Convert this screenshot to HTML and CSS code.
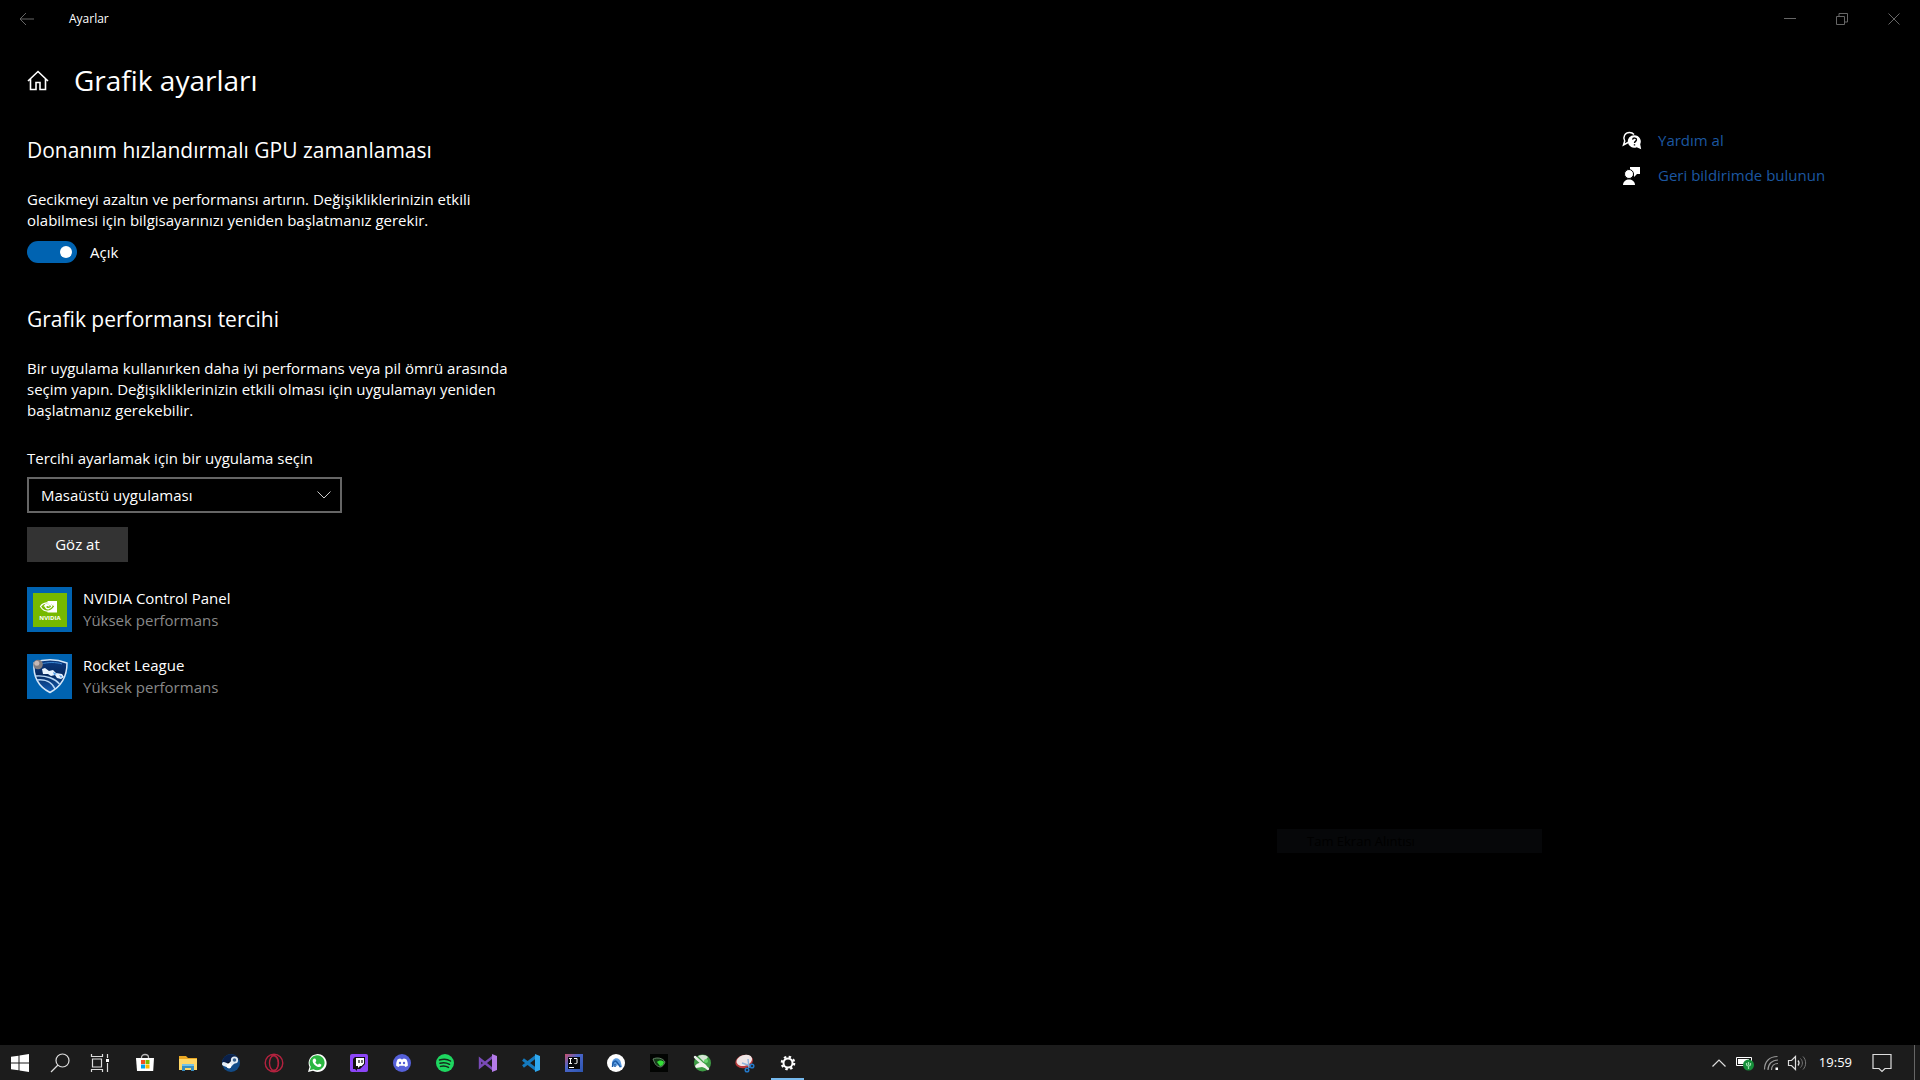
FILE: index.html
```html
<!DOCTYPE html>
<html lang="tr">
<head>
  <meta charset="UTF-8" />
  <meta name="viewport" content="width=device-width, initial-scale=1.0" />
  <title>Ayarlar</title>
  <link rel="stylesheet" href="styles.css">
</head>
<body>

  <header class="titlebar">
    <button class="back-btn" aria-label="Geri">
      <svg width="16" height="14" viewBox="0 0 16 14"><path d="M15 7H1M7 1L1 7l6 6" /></svg>
    </button>
    <span class="app-title">Ayarlar</span>
    <div class="window-buttons">
      <button aria-label="Simge durumuna küçült">
        <svg width="12" height="12" viewBox="0 0 12 12"><path d="M0 5.500h12" /></svg>
      </button>
      <button aria-label="Önceki boyut">
        <svg width="12" height="12" viewBox="0 0 12 12"><path d="M.5 3.500h8v8h-8zM3 3.500v-3h8.500v8.500h-3" /></svg>
      </button>
      <button aria-label="Kapat">
        <svg width="12" height="12" viewBox="0 0 12 12"><path d="M.5.5l11 11M11.500.5l-11 11" /></svg>
      </button>
    </div>
  </header>

  <div class="page-head">
    <a href="#" class="home-link" aria-label="Giriş">
      <svg width="22" height="22" viewBox="0 0 22 22"><path d="M1 12L11 2.500l10 9.500M3.500 10v10.500H9v-7h4v7h5.500V10" /></svg>
    </a>
    <h1>Grafik ayarları</h1>
  </div>

  <main class="content">
    <div class="settings">
      <section class="gpu">
        <h2>Donanım hızlandırmalı GPU zamanlaması</h2>
        <p>Gecikmeyi azaltın ve performansı artırın. Değişikliklerinizin etkili<br>olabilmesi için bilgisayarınızı yeniden başlatmanız gerekir.</p>
        <label class="toggle">
          <input type="checkbox" checked>
          <span>Açık</span>
        </label>
      </section>

      <section class="preference">
        <h2>Grafik performansı tercihi</h2>
        <p>Bir uygulama kullanırken daha iyi performans veya pil ömrü arasında<br>seçim yapın. Değişikliklerinizin etkili olması için uygulamayı yeniden<br>başlatmanız gerekebilir.</p>
        <label class="select-label" for="app-type">Tercihi ayarlamak için bir uygulama seçin</label>
        <div class="select-box">
          <select id="app-type">
            <option>Masaüstü uygulaması</option>
            <option>Microsoft Store uygulaması</option>
          </select>
          <svg class="chevron" width="14" height="8" viewBox="0 0 14 8"><path d="M.5.5L7 7 13.500.5" /></svg>
        </div>
        <button class="browse-btn">Göz at</button>
      </section>

      <ul class="app-list">
        <li>
          <svg class="app-icon" viewBox="0 0 45 45">
            <path fill="#76b900" d="M6 6h34v34H6z" />
            <path fill="#fff" d="M20.500 14H30v11.500h-9.500z" />
            <path fill="#76b900" stroke="#fff" stroke-width="1.200" d="M13.500 19.500c2.500-4 8.500-5.500 14.500-.5-4 6.500-10.500 7-14.500.5z" />
            <path fill="none" stroke="#fff" stroke-width="1.300" d="M17 19.500c2-3 5.500-3.500 8-.5-2 3.500-5.500 3.500-6.500 1 1-2 2.500-2 4-.8" />
            <text x="23" y="33" text-anchor="middle" class="nvidia-text">NVIDIA</text>
          </svg>
          <div>
            <div class="app-name">NVIDIA Control Panel</div>
            <div class="app-mode">Yüksek performans</div>
          </div>
        </li>
        <li>
          <svg class="app-icon" viewBox="0 0 45 45">
            <defs>
              <linearGradient id="shield" x1="0" y1="0" x2="0" y2="1">
                <stop offset="0" stop-color="#0c3a80" />
                <stop offset=".45" stop-color="#06295f" />
                <stop offset="1" stop-color="#1460b8" />
              </linearGradient>
            </defs>
            <path fill="url(#shield)" stroke="#d5e7f8" stroke-width="1.500" d="M7 9c10-4 22-4 33 0 0 14-5 23-17 29.500C12 33 6 23 7 9z" />
            <path fill="none" stroke="#b9d8f5" stroke-width="1.400" d="M10 26c8-1 15 2 18 9M8.500 22c11-1 20 3 24 8" />
            <path fill="none" stroke="#3b86d0" d="M14 10c7-2 15-2 21 0" />
            <path fill="#e8f3fd" d="M15 15l3-1 4 3 4-1 3 3 6 1 2 3-3 2-4-1-2-3-4 1-3-2-5 0z" />
            <path fill="#4c9be8" d="M19 16l3 2M26 18l4 2-3 1zM32 21l3 1-1 2z" />
            <circle cx="11" cy="10.500" r="4.800" fill="#817d80" />
            <circle cx="9.800" cy="9.300" r="2.500" fill="#c7b9b5" />
          </svg>
          <div>
            <div class="app-name">Rocket League</div>
            <div class="app-mode">Yüksek performans</div>
          </div>
        </li>
      </ul>
    </div>

    <aside class="help">
      <a href="#">
        <svg width="20" height="20" viewBox="0 0 20 20">
          <path fill="none" stroke="#fff" stroke-width="1.500" d="M6 11.500L1.500 14l1.200-4C.5 6 3 1.500 7.500 1.500c2 0 3.500.8 4.500 2" />
          <path fill="#fff" d="M12.500 4.200a6.300 6.300 0 0 1 5.700 9l1 5-4.500-2A6.300 6.300 0 1 1 12.500 4.200z" />
          <path fill="none" stroke="#000" stroke-width="1.400" d="M10.600 8.700c.3-2.400 4-2 3.800.2-.2 1.500-1.900 1.500-1.900 3.200M12.500 13.200v1.300" />
        </svg>
        <span>Yardım al</span>
      </a>
      <a href="#">
        <svg width="20" height="20" viewBox="0 0 20 20">
          <path fill="#fff" d="M8 1h10v7h-3l-3 3V8L8 4z" />
          <circle cx="7" cy="8" r="4.500" fill="#fff" stroke="#000" />
          <path fill="#fff" d="M1 19c0-7.500 12-7.500 12 0z" />
        </svg>
        <span>Geri bildirimde bulunun</span>
      </a>
    </aside>
  </main>

  <div class="snip-ghost">Tam Ekran Alıntısı</div>

  <footer class="taskbar">
    <nav class="system">
      <button aria-label="Başlat">
        <svg width="20" height="20" viewBox="0 0 20 20"><path fill="#fff" d="M1 3.800L8.500 2.700v6.800H1zM9.500 2.600L19 1v8.500H9.500zM1 10.500h7.500v6.800L1 16.200zM9.500 10.500H19V19l-9.500-1.500z" /></svg>
      </button>
      <button aria-label="Ara">
        <svg width="20" height="20" viewBox="0 0 20 20"><g class="line"><circle cx="12.500" cy="7.500" r="6.500" /><path d="M8 12l-7 7" /></g></svg>
      </button>
      <button aria-label="Görev görünümü">
        <svg width="20" height="20" viewBox="0 0 20 20"><path class="line" d="M1.500 1v2.500h11V1M2.500 6h9v8h-9zM1.500 19v-2.500h11V19M17.500 1v4M17.500 10v9" /><path fill="#fff" d="M16 6h3v3h-3z" /></svg>
      </button>
    </nav>

    <nav class="pinned">
      <button aria-label="Microsoft Store">
        <svg viewBox="0 0 20 20"><path fill="none" stroke="#bbb" stroke-width="1.300" d="M6.500 7V4.500c0-4 7-4 7 0V7" /><path fill="#fff" d="M1 5h18l-.8 13H2z" /><path fill="#f25022" d="M6 7h4v4H6z" /><path fill="#7fba00" d="M10.500 7h4v4h-4z" /><path fill="#00a4ef" d="M6 11.500h4v4H6z" /><path fill="#ffb900" d="M10.500 11.500h4v4h-4z" /></svg>
      </button>
      <button aria-label="Dosya Gezgini">
        <svg viewBox="0 0 20 20"><path fill="#e9a723" d="M1 3h7l2 2h9v12H1z" /><path fill="#ffd767" d="M1 6h18v11H1z" /><path fill="#398fc0" d="M4 18v-7h12v7h-3v-3H7v3z" /><path fill="#76c3e8" d="M4 11h12v2H4z" /></svg>
      </button>
      <button aria-label="Steam">
        <svg viewBox="0 0 20 20"><circle cx="10" cy="10" r="9" fill="#124b87" /><path fill="#0a204a" d="M3 4.500a9 9 0 0 1 15 2L9 12 1 9z" /><path stroke="#e4edf5" stroke-width="4" stroke-linecap="round" d="M3 11l5 2 6-6" /><circle cx="13.500" cy="7" r="3.600" fill="#e4edf5" /><circle cx="13.500" cy="7" r="1.800" fill="#39628f" /><circle cx="8" cy="13" r="2.400" fill="#fff" /></svg>
      </button>
      <button aria-label="Opera GX">
        <svg viewBox="0 0 20 20"><g fill="none" stroke="#b5223f"><circle cx="10" cy="10" r="8.800" stroke-width="1.400" /><ellipse cx="10" cy="10" rx="4.500" ry="7.500" stroke-width="1.400" /><path d="M7 3c9-3 10 17 0 14" /></g></svg>
      </button>
      <button aria-label="WhatsApp">
        <svg viewBox="0 0 20 20"><path fill="#fff" d="M1 19l1.500-5A9 9 0 1 1 6 17.800z" /><path fill="#2bb741" d="M2.800 17.200l1-3.400A7.500 7.500 0 1 1 6.500 16.300z" /><path fill="#fff" d="M7 5.500l1.500.2.8 2.300-1 1.200c.6 1.200 1.400 2 2.700 2.600l1-1.200 2.300 1c.2 4-4.500 2.400-6.500.3C5.700 10 4.700 7 7 5.500z" /></svg>
      </button>
      <button aria-label="Twitch">
        <svg viewBox="0 0 20 20"><rect x="1" y="1" width="18" height="18" rx="2" fill="#8c45f7" /><path fill="#111" d="M4 6l2-2h10v7l-5 5H8v2l-2-2H4z" /><path fill="#fff" d="M7 5h8v5.500L12.500 13H11l-2 2v-2H7z" /><path stroke="#222" stroke-width="1.300" d="M10 7v3M13 7v3" /></svg>
      </button>
      <button aria-label="Discord">
        <svg viewBox="0 0 20 20"><circle cx="10" cy="10" r="9" fill="#5560d8" /><path fill="#fff" d="M5.500 6.500c1-.8 2-1 3-1l.5.8h2l.5-.8c1 0 2 .2 3 1 1 2 1.500 4 1.300 6.300-1 .8-1.800 1-2.500 1.200l-.9-1.300H7.600L6.700 14c-.8-.2-1.500-.4-2.500-1.200C4 10.500 4.500 8.500 5.500 6.500z" /><circle cx="8" cy="10" r="1.200" fill="#5560d8" /><circle cx="12" cy="10" r="1.200" fill="#5560d8" /></svg>
      </button>
      <button aria-label="Spotify">
        <svg viewBox="0 0 20 20"><circle cx="10" cy="10" r="9" fill="#1ed760" /><path fill="none" stroke="#17281c" stroke-width="1.500" stroke-linecap="round" d="M4.500 7c4-1.300 8-1 11 1M5 10.300c3.500-1 6.500-.6 9.500 1M5.500 13.400c3-.8 5.500-.5 8 1" /></svg>
      </button>
      <button aria-label="Visual Studio">
        <svg viewBox="0 0 20 20"><path fill="none" stroke="#7a4bb8" stroke-width="2.400" d="M14.500 4L2 14V6l12.500 10" /><path fill="#b47be8" d="M14 1l5 2v14l-5 2z" /></svg>
      </button>
      <button aria-label="Visual Studio Code">
        <svg viewBox="0 0 20 20"><path fill="none" stroke="#1479bd" stroke-width="3" d="M15 3.500L2 13.500M2 6.500l13 10" /><path fill="#2fa8ee" d="M14 1l5 2v14l-5 2z" /></svg>
      </button>
      <button aria-label="IntelliJ IDEA">
        <svg viewBox="0 0 20 20"><defs><linearGradient id="idea" x2="1" y2="1"><stop offset="0" stop-color="#c9506b" /><stop offset=".4" stop-color="#4b65c8" /><stop offset="1" stop-color="#2b55b0" /></linearGradient></defs><path fill="url(#idea)" d="M1 1h18v18H1z" /><path fill="#08080c" d="M4 4h12v12H4z" /><path fill="none" stroke="#fff" d="M5 5.500h3M6.500 5.500v5M5 10.500h3M10 5.500h3v4.500c0 .5-1 .8-2.500.5M5 14.500h5" /></svg>
      </button>
      <button aria-label="Android Studio">
        <svg viewBox="0 0 20 20"><circle cx="10" cy="10" r="9" fill="#fff" /><path fill="#5b9be0" d="M6 12c-1-8 8-9 9-2l1 4-2 .5-2-4-1 3-2-2-1 2z" /><path fill="none" stroke="#1c5ca8" stroke-width="1.500" d="M6.500 14c0-3 1-6 3.500-6M10 8l4.500 6M9 11v3" /></svg>
      </button>
      <button aria-label="Razer">
        <svg viewBox="0 0 20 20"><path fill="#020402" d="M1 1h18v18H1z" /><path fill="#143d17" stroke="#7a9b7c" stroke-width=".8" d="M4 6c4-2 10-1 12 3-1 3-3 5-5 5-4-1-5-3-7-8z" /><path fill="#35dd38" d="M8 9c2-2 5-2 7 0-1 3-2 4-4 4z" /></svg>
      </button>
      <button aria-label="Oyun aracı">
        <svg viewBox="0 0 20 20"><circle cx="10.500" cy="10" r="8.500" fill="#3f9c46" /><path fill="#d4e5d4" d="M6 3c5-2 8-1 10 1l-4 5z" /><path stroke="#e9f0e8" stroke-width="2.400" stroke-linecap="round" d="M3 4l13 12" /><path fill="#f4f4f0" d="M3 13c3-4 8-4 11-1l2 4-6-2-6 1z" /><circle cx="14" cy="8" r="2" fill="#66d56c" /></svg>
      </button>
      <button aria-label="Ekran Alıntısı Aracı">
        <svg viewBox="0 0 20 20"><ellipse cx="9" cy="8.500" rx="9" ry="6.500" fill="#b93a3a" transform="rotate(-18 9 8)" /><ellipse cx="9.500" cy="7.500" rx="8" ry="5.300" fill="#eee5e5" transform="rotate(-18 9 8)" /><path stroke="#8cb4dc" stroke-width="1.400" d="M7 10l9 3M13 6l1 9" /><g fill="none" stroke="#2478c8" stroke-width="1.500"><circle cx="12" cy="17" r="1.800" /><circle cx="17" cy="13" r="1.800" /></g></svg>
      </button>
      <button class="active" aria-label="Ayarlar">
        <svg viewBox="0 0 20 20"><g fill="none" stroke="#fff"><circle cx="10" cy="10" r="4.500" stroke-width="2" /><circle cx="10" cy="10" r="6.200" stroke-width="2.200" stroke-dasharray="2.430 2.430" /></g></svg>
      </button>
    </nav>

    <div class="tray">
      <button aria-label="Gizli simgeleri göster">
        <svg width="16" height="10" viewBox="0 0 16 10"><path class="line" d="M1.500 8.500L8 2l6.500 6.500" /></svg>
      </button>
      <button aria-label="Pil">
        <svg width="20" height="16" viewBox="0 0 20 16"><path fill="#fff" d="M3 4h11v5H3z" /><path fill="none" stroke="#fff" d="M1.500 2.500h15v8h-15z" /><circle cx="13.500" cy="10" r="5.500" fill="#168f3a" /><path fill="none" stroke="#9be0ac" stroke-width="1.200" d="M13.500 14v-3M11.500 8v1.500c0 2 4 2 4 0V8M13.500 7v3" /></svg>
      </button>
      <button aria-label="Ağ">
        <svg width="16" height="16" viewBox="0 0 16 16"><g fill="none" stroke="#999" stroke-width="1.200"><path d="M1.500 14.500c0-8 5-13 13-13M5 15c0-6 4-10 10-10M8.500 15c0-4 2.500-6.500 6.500-6.500" /></g><path fill="#fff" d="M12.500 12.500h2.500V15h-2.500z" /></svg>
      </button>
      <button aria-label="Ses">
        <svg width="20" height="16" viewBox="0 0 20 16"><path class="line" d="M1.500 5.500h3l4-4v13l-4-4h-3zM11 5.500c1.300 1.500 1.300 3.500 0 5" /><path fill="none" stroke="#777" d="M13.500 3.500c2.500 2.500 2.500 6.500 0 9M16 1.500c3.500 3.500 3.500 9.500 0 13" /></svg>
      </button>
      <time>19:59</time>
      <button class="notifications" aria-label="Bildirimler">
        <svg width="20" height="20" viewBox="0 0 20 20"><path class="line" d="M1 1.500h18v14h-6l-3 3-3-3H1z" /></svg>
      </button>
      <button class="show-desktop" aria-label="Masaüstünü göster"></button>
    </div>
  </footer>

</body>
</html>
```

FILE: styles.css
```css
* {
  box-sizing: border-box;
}

body {
  margin: 0;
  min-height: 100vh;
  display: flex;
  flex-direction: column;
  position: relative;
  background: #000;
  color: #fff;
  font-family: "Open Sans", "Noto Sans", sans-serif;
  font-size: 15px;
  line-height: 21px;
}

button {
  padding: 0;
  border: none;
  background: none;
  color: inherit;
  font: inherit;
}

svg {
  display: block;
}

/* title bar */
.titlebar {
  display: flex;
  align-items: center;
  height: 37px;
  padding-left: 19px;
}

.titlebar svg {
  fill: none;
  stroke: #666;
}

.back-btn {
  width: 50px;
}

.app-title {
  font-size: 12px;
}

.window-buttons {
  display: flex;
  margin-left: auto;
}

.window-buttons button {
  width: 52px;
  height: 36px;
  display: flex;
  align-items: center;
  justify-content: center;
}

/* page heading */
.page-head {
  display: flex;
  align-items: center;
  gap: 25px;
  height: 86px;
  padding-left: 27px;
}

.home-link svg {
  fill: none;
  stroke: #fff;
  stroke-width: 1.6;
}

h1 {
  margin: 0;
  font-size: 28px;
  line-height: 40px;
  font-weight: 400;
}

h2 {
  margin: 0;
  font-size: 21px;
  line-height: 30px;
  font-weight: 400;
}

/* content */
.content {
  flex: 1;
  display: flex;
  justify-content: space-between;
  padding-left: 27px;
}

.gpu,
.preference {
  display: flex;
  flex-direction: column;
  align-items: flex-start;
}

.settings {
  padding-top: 12px;
}

.settings p {
  margin: 24px 0 0;
}

.toggle {
  display: flex;
  align-items: center;
  gap: 13px;
  margin-top: 10px;
  height: 22px;
}

.toggle input {
  appearance: none;
  display: flex;
  align-items: center;
  justify-content: flex-end;
  width: 50px;
  height: 22px;
  margin: 0;
  padding: 0 5px;
  border-radius: 11px;
  background: #0063b1;
}

.toggle input::before {
  content: "";
  width: 12px;
  height: 12px;
  border-radius: 50%;
  background: #fff;
}

.preference {
  margin-top: 41px;
}

.select-label {
  margin-top: 27px;
}

.select-box {
  display: flex;
  align-items: center;
  position: relative;
  width: 315px;
  height: 36px;
  margin-top: 8px;
}

.select-box select {
  appearance: none;
  width: 100%;
  height: 100%;
  padding: 0 40px 0 12px;
  border: 2px solid #666;
  border-radius: 0;
  background: #000;
  color: #fff;
  font: inherit;
}

.chevron {
  position: absolute;
  right: 11px;
  fill: none;
  stroke: #ccc;
  pointer-events: none;
}

.browse-btn {
  width: 101px;
  height: 35px;
  margin-top: 14px;
  background: #333;
}

/* app list */
.app-list {
  list-style: none;
  margin: 25px 0 0;
  padding: 0;
}

.app-list li {
  display: flex;
  gap: 11px;
  height: 45px;
  margin-bottom: 22px;
}

.app-icon {
  width: 45px;
  height: 45px;
  background: #0063b1;
}

.nvidia-text {
  fill: #fff;
  font-size: 6px;
  font-weight: 700;
}

.app-name,
.app-mode {
  line-height: 22px;
}

.app-mode {
  color: #888;
}

/* help links */
.help {
  width: 298px;
}

.help a {
  display: flex;
  align-items: center;
  gap: 16px;
  height: 35px;
  color: #1c57a0;
  text-decoration: none;
}

/* fading snip menu entry */
.snip-ghost {
  position: absolute;
  right: 378px;
  bottom: 227px;
  width: 265px;
  height: 24px;
  padding-left: 30px;
  background: #060709;
  color: #000;
  font-size: 13px;
  line-height: 24px;
}

/* taskbar */
.taskbar {
  display: flex;
  height: 35px;
  background: #1c1c1c;
}

.taskbar button {
  display: flex;
  align-items: center;
  justify-content: center;
}

.taskbar .line {
  fill: none;
  stroke: #ddd;
  stroke-width: 1.2;
}

.system {
  display: flex;
  width: 124px;
}

.system button {
  width: 40px;
}

.pinned {
  display: flex;
  width: 685px;
}

.pinned button {
  flex: 1;
}

.pinned svg {
  width: 20px;
  height: 20px;
}

.pinned .active {
  position: relative;
}

.active::after {
  content: "";
  position: absolute;
  left: 5px;
  right: 5px;
  bottom: 0;
  height: 2px;
  background: #76b9ed;
}

.tray {
  display: flex;
  align-items: center;
  gap: 8px;
  margin-left: auto;
}

.tray time {
  margin-left: 4px;
  font-size: 13px;
}

.notifications {
  margin-left: 12px;
}

.show-desktop {
  width: 6px;
  height: 35px;
  margin-left: 14px;
  border-left: 1px solid #666;
}
```
